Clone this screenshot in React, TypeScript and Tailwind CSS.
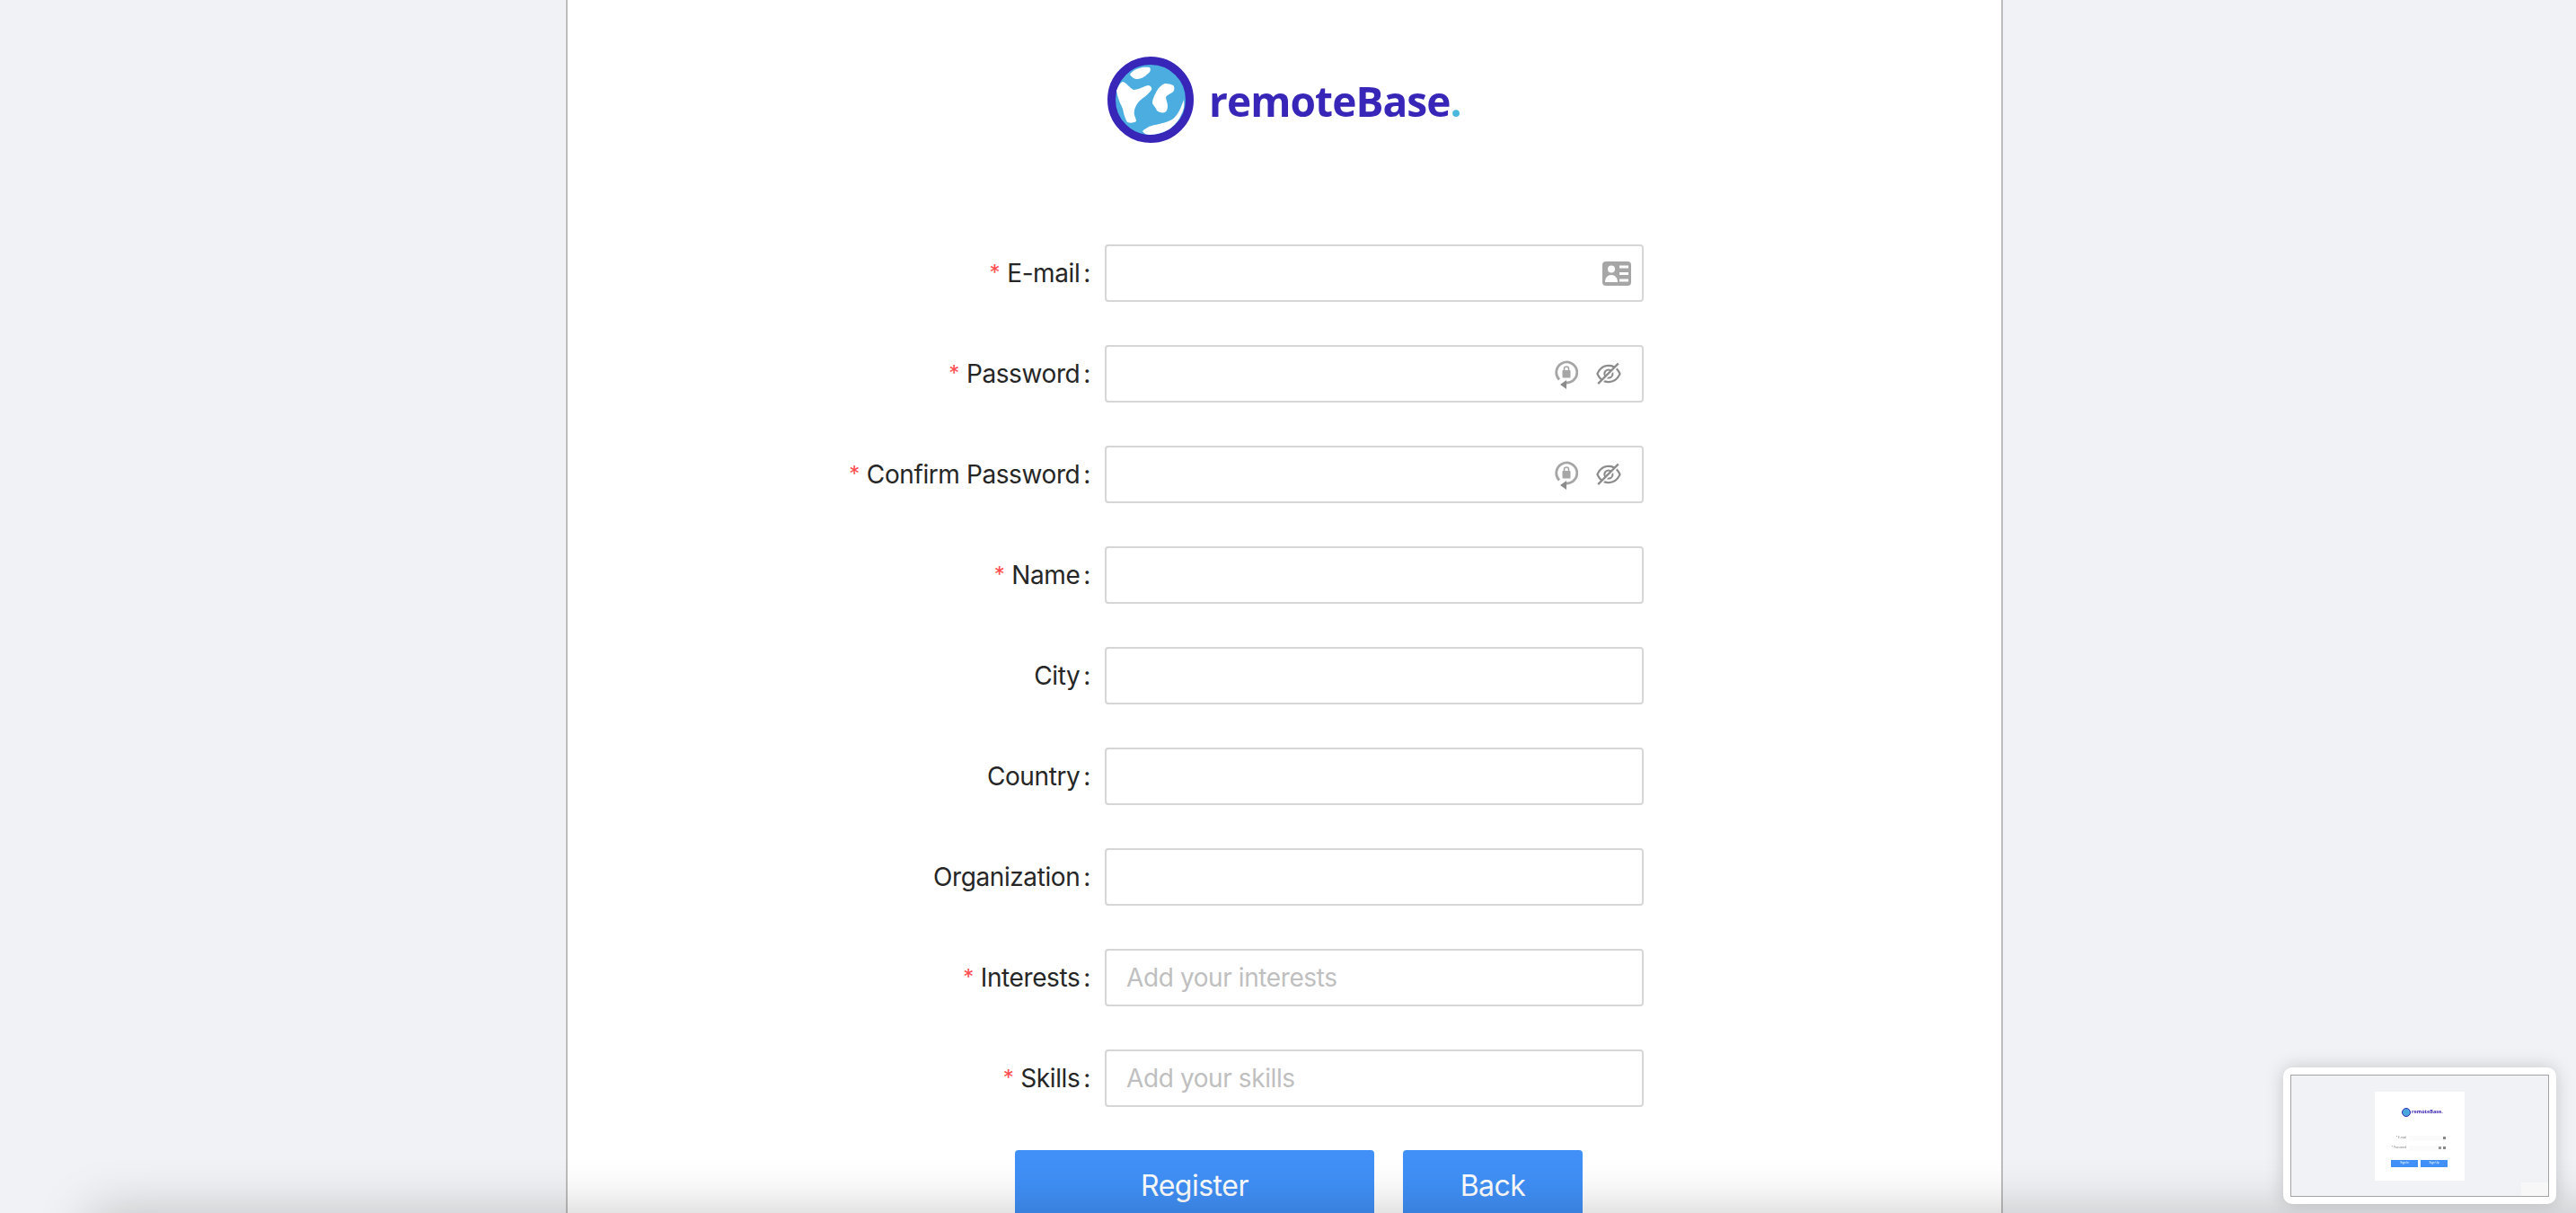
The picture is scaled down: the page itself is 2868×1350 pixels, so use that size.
import { ReactNode } from 'react';
import { AiOutlineEyeInvisible } from 'react-icons/ai';

const IdCardIcon = () => (
  <svg viewBox="0 0 32 27" className="w-8 h-[27px] -mr-[9px]">
    <rect width="32" height="27" rx="4" fill="#a6a6a6" />
    <circle cx="10" cy="8.500" r="4" fill="#fff" />
    <path d="M3 23c0-5 3-8 7-8s7 3 7 8z" fill="#fff" />
    <path d="M19 4.500h10v3H19zM19 12h10v3H19zM19 19.500h10v3H19z" fill="#fff" />
  </svg>
);

const LockIcon = () => (
  <svg viewBox="0 0 26 34" className="w-[26px] h-[34px] mt-[2px]" fill="none">
    <path d="M5 22.500A11.500 11.500 0 1 1 13 26" stroke="#a6a6a6" strokeWidth="2.800" />
    <path d="M13 23v10l-7-5z" fill="#8c8c8c" />
    <rect x="8.500" y="12" width="9" height="8.500" rx="1" fill="#a6a6a6" />
    <path d="M10.500 12v-1.500a2.500 2.500 0 0 1 5 0V12" stroke="#a6a6a6" strokeWidth="1.600" />
  </svg>
);

const EyeOff = () => <AiOutlineEyeInvisible className="text-[32px] text-[#8c8c8c]" />;

const Field = ({
  label,
  required,
  placeholder,
  children,
}: {
  label: string;
  required?: boolean;
  placeholder?: string;
  children?: ReactNode;
}) => (
  <div className="grid grid-cols-[400px_600px] items-center">
    <label className="flex items-center justify-end text-[28px] tracking-[-0.4px] text-[#262626] pr-[16px]">
      {required && <span className="text-[#ff4d4f] mr-[8px] text-[24px]">*</span>}
      {label}
      <span className="ml-[4px]">:</span>
    </label>
    <div className="flex items-center h-16 border-2 border-[#d6d6d6] rounded-[4px] bg-white pl-[22px] pr-[21px]">
      <span className="flex-1 text-[28px] tracking-[-0.4px] text-[#bfbfbf]">{placeholder}</span>
      <div className="flex items-center gap-[18px]">{children}</div>
    </div>
  </div>
);

// small copy of the login page, shown as the preview in the corner
const MiniRow = ({ label, lock }: { label: string; lock?: boolean }) => (
  <div className="flex items-center gap-[3px] h-[6px]">
    <span className="w-[33px] text-right text-[3px] text-[#777]">{label}</span>
    <div className="flex justify-end items-center gap-[2px] w-[42px] h-[6px] pr-[1px] bg-[#fbfbfb]">
      {lock && <div className="w-[3px] h-[3px] bg-[#999]" />}
      <div className="w-[3px] h-[3px] bg-[#888]" />
    </div>
  </div>
);

const Preview = () => (
  <div className="absolute left-[2542px] top-[1188px] w-[304px] h-[152px] bg-white rounded-[10px] p-2 shadow-[0_0_20px_rgba(0,0,0,0.18)]">
    <div className="relative flex justify-center items-center h-full border border-[#a3a3a3] bg-[#f0f2f5] blur-[0.5px]">
      <div className="flex flex-col w-[100px] h-[99px] bg-white pt-[18px]">
        <div className="flex items-center gap-[1px] ml-[30px]">
          <div className="w-[10px] h-[10px] rounded-full border border-[#3a25b5] bg-[#4aa8dc]" />
          <span className="text-[5.500px] font-bold text-[#3a25b5] font-['Open_Sans',sans-serif]">remoteBase.</span>
        </div>
        <div className="flex flex-col gap-[5px] mt-[21px] ml-[2px]">
          <MiniRow label="* E-mail" />
          <MiniRow label="* Password" lock />
        </div>
        <div className="flex gap-[3px] mt-[10px] ml-[18px]">
          <div className="flex items-center justify-center w-[30px] h-2 bg-[#4090f7] text-[3px] text-white">Sign In</div>
          <div className="flex items-center justify-center w-[30px] h-2 bg-[#4090f7] text-[3px] text-white">Sign Up</div>
        </div>
      </div>
      <div className="absolute right-0 bottom-0 w-[30px] h-[15px] bg-[#f7f7f7]" />
    </div>
  </div>
);

export default function App() {
  return (
    <div className="relative h-[1350px] overflow-hidden bg-[#f0f2f5] font-['Inter',sans-serif]">
      <div className="flex flex-col w-[1600px] h-full ml-[630px] bg-white border-x-2 border-[#bdbdbd]">
        <div className="flex items-center gap-[17px] pt-[63px] ml-[601px]">
          <svg viewBox="0 0 96 96" className="w-24 h-24 blur-[0.5px]">
            <circle cx="48" cy="48" r="43.500" fill="#4bade0" stroke="#3726b8" strokeWidth="9" />
            <path d="M25 20c3-5 10-9 22-8 2 3 0 6-2 7-4 4-8 6-12 6-3 0-6-2-8-5z" fill="#fff" />
            <path d="M10 38c2-5 4-9 7-10 4 1 8 7 12 9 6 0 11-4 16-5 3 0 5 3 4 5-3 5-10 9-14 13-4 5-6 10-5 15 1 3 2 5 2 7-3 2-7 2-10 1-3-5-4-10-5-15-2-5-5-9-7-20z" fill="#fff" />
            <path d="M55 38c2-4 6-7 9-8 4 0 9 1 10 3 1 3 0 6-2 7-3 2-6 3-7 5 0 3 2 6 2 10 0 3-1 6-3 7-3 1-7 0-9-2-1-3-4-6-5-8 0-5 3-10 5-14z" fill="#fff" />
            <path d="M85 48c-3 8-6 17-13 22-7 4-16 5-23 7-4 1-8 4-10 6 2 3 5 4 8 4 8 0 17-3 23-7 6-5 10-10 12-15 3-5 4-11 3-17z" fill="#fff" />
          </svg>
          <span className="mt-[1px] text-[46px] leading-none font-bold tracking-[-0.9px] text-[#3726b8] font-['Open_Sans',sans-serif] blur-[0.5px]">
            remoteBase<span className="text-[#4bb8e0]">.</span>
          </span>
        </div>

        <form className="flex flex-col gap-12 w-[1200px] ml-[198px] mt-[113px]">
          <Field label="E-mail" required>
            <IdCardIcon />
          </Field>
          <Field label="Password" required>
            <LockIcon />
            <EyeOff />
          </Field>
          <Field label="Confirm Password" required>
            <LockIcon />
            <EyeOff />
          </Field>
          <Field label="Name" required />
          <Field label="City" />
          <Field label="Country" />
          <Field label="Organization" />
          <Field label="Interests" required placeholder="Add your interests" />
          <Field label="Skills" required placeholder="Add your skills" />
          <div className="flex gap-8 pl-[300px]">
            <button type="button" className="w-[400px] h-20 rounded-[4px] bg-[#4090f7] text-[32px] tracking-[-0.5px] text-white">
              Register
            </button>
            <button type="button" className="w-[200px] h-20 rounded-[4px] bg-[#4090f7] text-[32px] tracking-[-0.5px] text-white">
              Back
            </button>
          </div>
        </form>
      </div>

      {/* shadow of the window lying just under the visible area */}
      <div className="absolute left-[100px] right-[-100px] top-[1350px] h-[100px] shadow-[0_0_60px_rgba(0,0,0,0.22)] bg-black" />
      <Preview />
    </div>
  );
}
